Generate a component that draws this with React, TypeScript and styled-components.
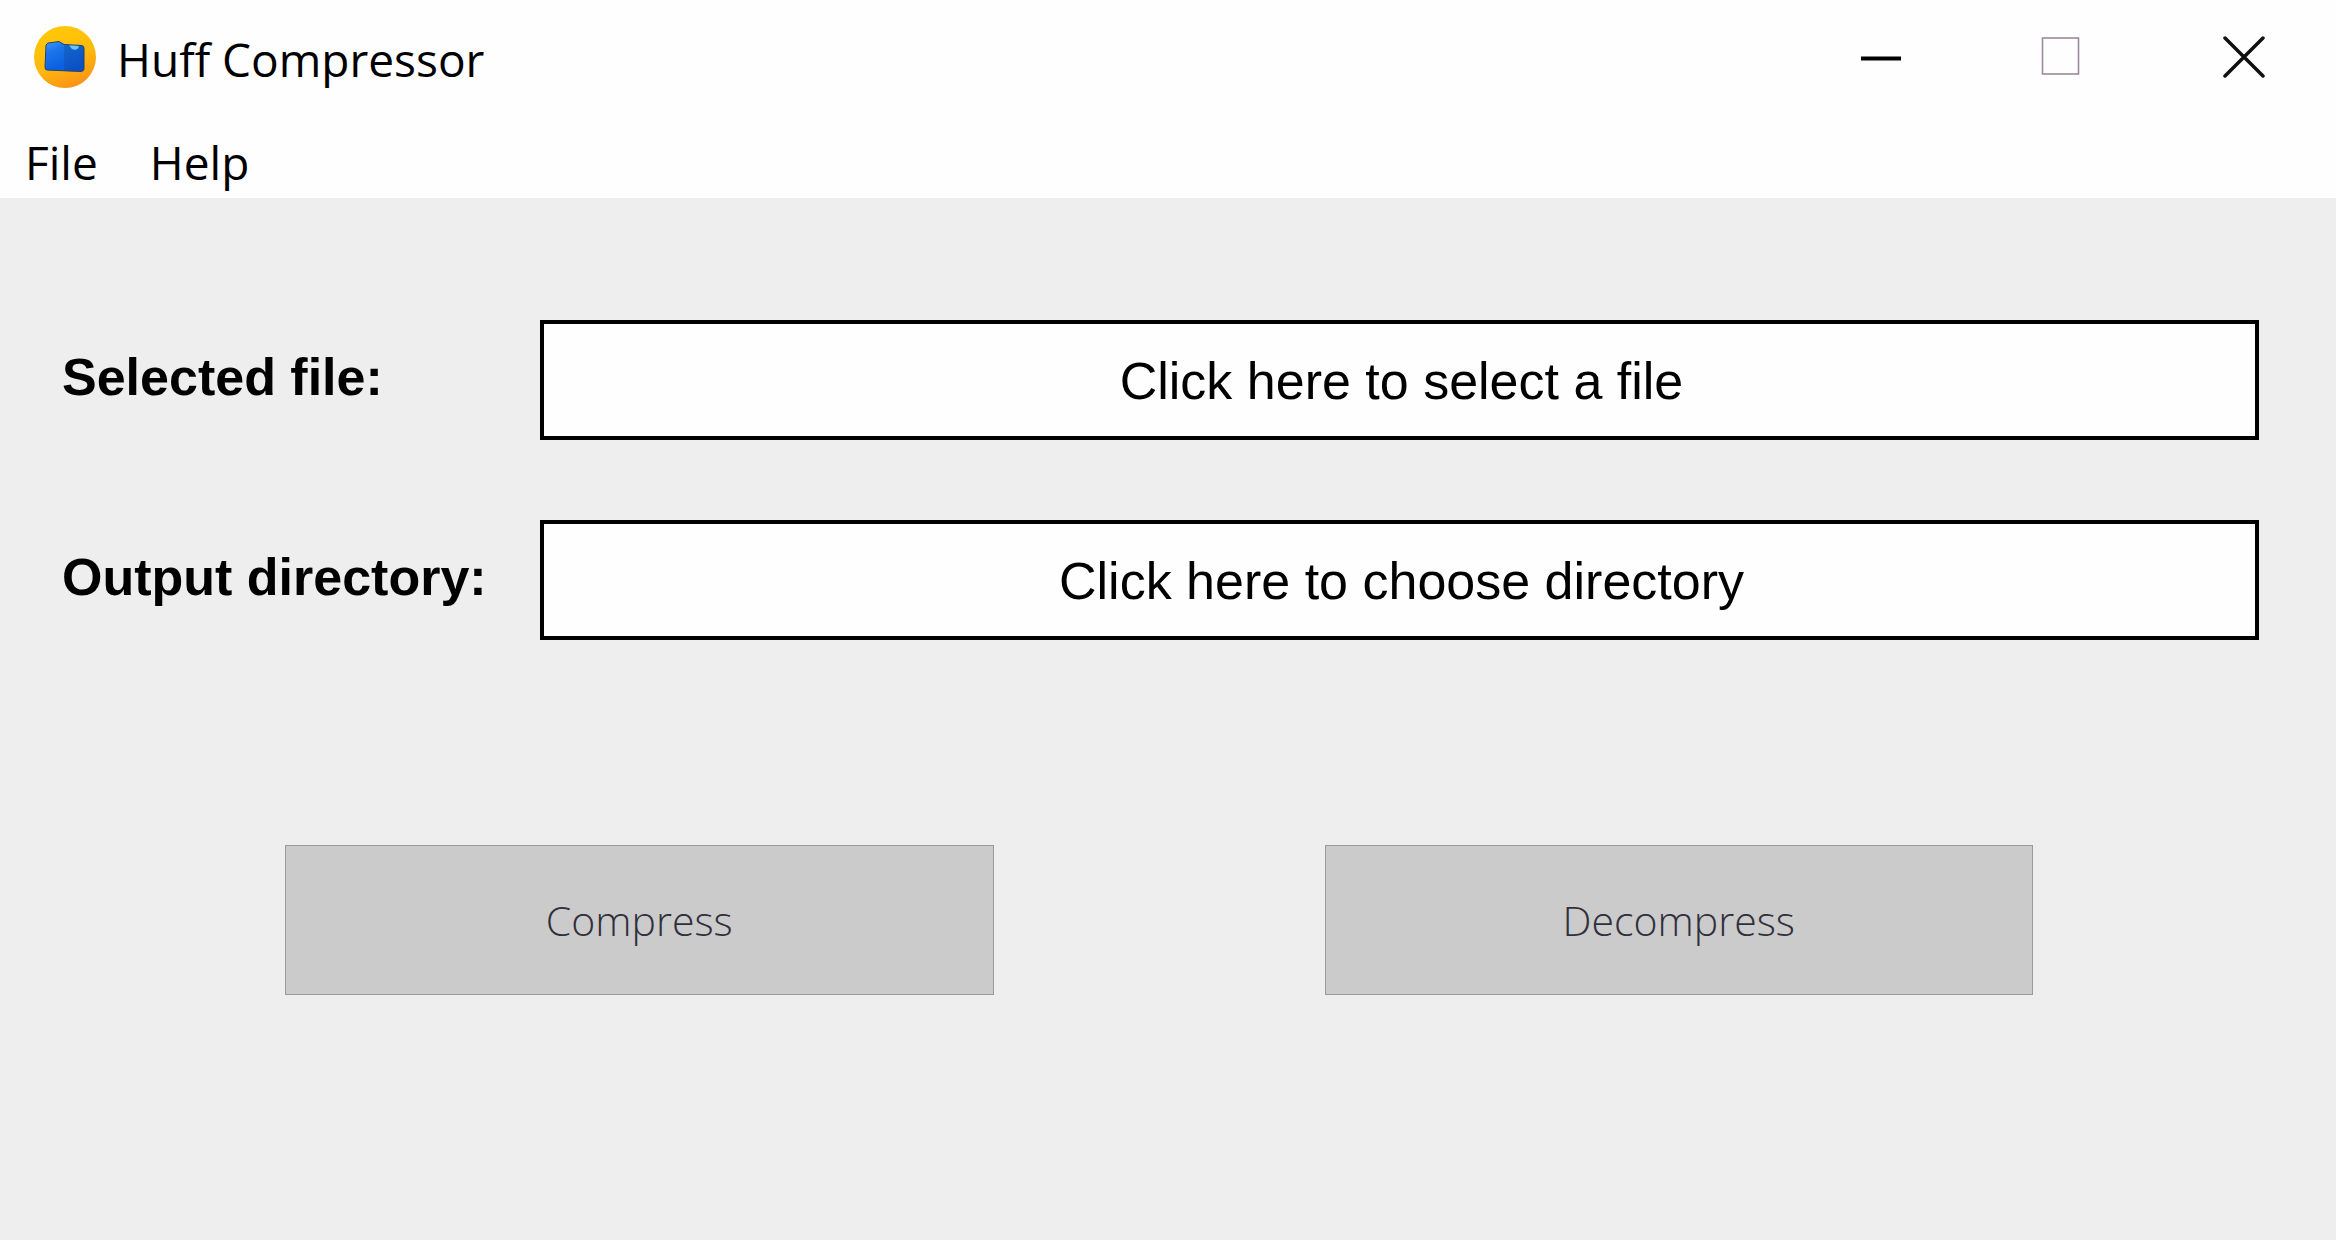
import React from "react";
import styled, { createGlobalStyle } from "styled-components";

const GlobalStyle = createGlobalStyle`
  *, *::before, *::after { box-sizing: border-box; }
  body { margin: 0; background: #eeeeee; }
  button { margin: 0; padding: 0; border: 0; background: none; color: inherit; }
`;

const uiFont = `"Open Sans", "Noto Sans", sans-serif`;
const formFont = `"Liberation Sans", Arial, sans-serif`;

const Window = styled.div`
  display: flex;
  flex-direction: column;
  min-height: 100vh;
  background: #eeeeee;
  color: #000000;
`;

const TitleBar = styled.header`
  display: flex;
  align-items: center;
  height: 114px;
  padding-left: 33px;
  background: #fefefe;
`;

const Title = styled.h1`
  flex: 1;
  margin: 0;
  padding: 4px 0 0 20px;
  font: 400 46px/64px ${uiFont};
`;

const WindowControls = styled.div`
  display: flex;
  align-self: stretch;
  padding-right: 1px;
`;

const WindowControl = styled.button`
  display: grid;
  place-items: center;
  width: 182px;
`;

const MenuBar = styled.nav`
  display: flex;
  gap: 52px;
  height: 84px;
  padding: 16px 25px 4px;
  background: #fefefe;
`;

const MenuItem = styled.button`
  font: 400 46px/64px ${uiFont};
`;

const Content = styled.main`
  flex: 1;
  padding-top: 122px;
`;

const Fields = styled.div`
  display: grid;
  grid-template-columns: 478px 1fr;
  gap: 80px 0;
  align-items: center;
  padding: 0 77px 0 62px;
`;

const FieldLabel = styled.label`
  padding-bottom: 6px;
  font: 700 52px/60px ${formFont};
`;

const PickerButton = styled.button`
  height: 120px;
  padding: 2px 0 0 4px;
  border: 4px solid #000000;
  background: #fefefe;
  font: 400 52px/60px ${formFont};
`;

const Actions = styled.div`
  display: grid;
  grid-template-columns: 1fr 1fr;
  gap: 331px;
  margin-top: 205px;
  padding: 0 303px 0 285px;
`;

const ActionButton = styled.button`
  height: 150px;
  border: 1px solid #979b99;
  background: #cbcbcb;
  color: #30303c;
  font: 300 41px/56px ${uiFont};
`;

function AppLogo() {
  return (
    <svg width="64" height="64" viewBox="0 0 64 64" aria-hidden="true">
      <defs>
        <linearGradient id="disc" x1="0.3" y1="0" x2="0.7" y2="1">
          <stop offset="0" stopColor="#ffc908" />
          <stop offset="0.55" stopColor="#ffb90c" />
          <stop offset="1" stopColor="#fb8f18" />
        </linearGradient>
        <linearGradient id="leftPage" x1="0" y1="0" x2="0.3" y2="1">
          <stop offset="0" stopColor="#3f9bf6" />
          <stop offset="0.4" stopColor="#1b76ec" />
          <stop offset="1" stopColor="#0b60df" />
        </linearGradient>
        <linearGradient id="rightPage" x1="0" y1="0" x2="0.4" y2="1">
          <stop offset="0" stopColor="#1767cc" />
          <stop offset="1" stopColor="#0b4fc4" />
        </linearGradient>
      </defs>
      <circle cx="32" cy="32" r="31" fill="url(#disc)" />
      <path d="M15 18 L26 16.500 L31 19 L31 46 L14 45 Q12 45 12 42 L13 20 Z" fill="url(#leftPage)" />
      <path d="M31 19.500 L49 20.500 Q51 21 51 23 L51 44 Q51 46 48 46.500 L31 46 Z" fill="url(#rightPage)" />
      <path d="M36 20.500 Q41 18.500 46 21.500 Q44 26.500 39 24 Z" fill="#66c7fb" />
      <path
        d="M15 18 L26 16.500 L31 19.500 L49 20.500 Q51 21 51 23 L51 44 Q51 46 48 46.500 L14 45 Q12 45 12 42 L13 20 Z"
        fill="none"
        stroke="#24436f"
        strokeWidth="1"
        strokeLinejoin="round"
      />
    </svg>
  );
}

function MinimizeIcon() {
  return (
    <svg width="42" height="42" viewBox="0 0 42 42" aria-hidden="true">
      <path d="M2 22.500H42" stroke="#000" strokeWidth="4" />
    </svg>
  );
}

function MaximizeIcon() {
  return (
    <svg width="42" height="42" viewBox="0 0 42 42" aria-hidden="true">
      <rect x="1.500" y="2" width="36" height="36" fill="none" stroke="#9c8b9c" strokeWidth="1.600" />
    </svg>
  );
}

function CloseIcon() {
  return (
    <svg width="42" height="42" viewBox="0 0 42 42" aria-hidden="true">
      <path d="M2 2L40 40M40 2L2 40" stroke="#111" strokeWidth="3.500" strokeLinecap="round" />
    </svg>
  );
}

export default function App() {
  return (
    <>
      <GlobalStyle />
      <Window>
        <TitleBar>
          <AppLogo />
          <Title>Huff Compressor</Title>
          <WindowControls>
            <WindowControl type="button" aria-label="Minimize">
              <MinimizeIcon />
            </WindowControl>
            <WindowControl type="button" aria-label="Maximize" disabled>
              <MaximizeIcon />
            </WindowControl>
            <WindowControl type="button" aria-label="Close">
              <CloseIcon />
            </WindowControl>
          </WindowControls>
        </TitleBar>
        <MenuBar>
          <MenuItem type="button">File</MenuItem>
          <MenuItem type="button">Help</MenuItem>
        </MenuBar>
        <Content>
          <Fields>
            <FieldLabel htmlFor="selected-file">Selected file:</FieldLabel>
            <PickerButton id="selected-file" type="button">
              Click here to select a file
            </PickerButton>
            <FieldLabel htmlFor="output-directory">Output directory:</FieldLabel>
            <PickerButton id="output-directory" type="button">
              Click here to choose directory
            </PickerButton>
          </Fields>
          <Actions>
            <ActionButton type="button" disabled>
              Compress
            </ActionButton>
            <ActionButton type="button" disabled>
              Decompress
            </ActionButton>
          </Actions>
        </Content>
      </Window>
    </>
  );
}
